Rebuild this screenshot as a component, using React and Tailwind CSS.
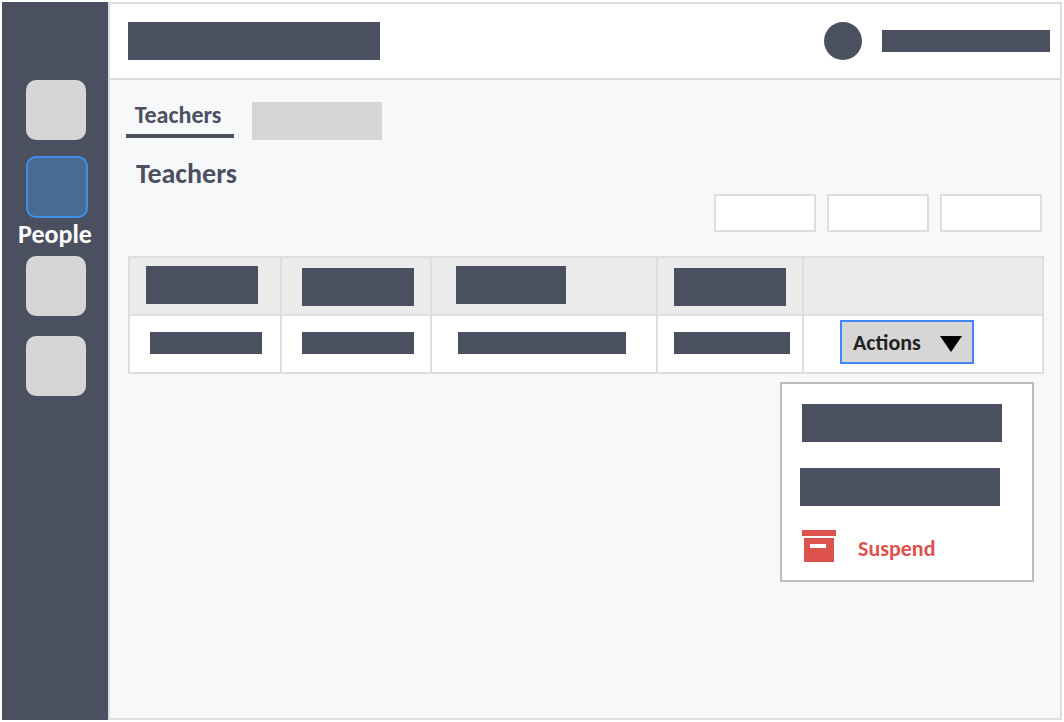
import { useState } from "react";

const columns = [
  { name: "Name", head: "ml-4 mt-2 w-28", cell: "ml-5 w-28" },
  { name: "Role", head: "ml-5 mt-2.5 w-28", cell: "ml-5 w-28" },
  { name: "Email", head: "ml-6 mt-2 w-[110px]", cell: "ml-[26px] w-[168px]" },
  { name: "Status", head: "ml-4 mt-2.5 w-28", cell: "ml-4 w-[116px]" },
];

function NavButton({ label }) {
  return (
    <button type="button" aria-label={label} className="block size-15 rounded-[10px] bg-[#d6d6d6]" />
  );
}

function Sidebar() {
  return (
    <nav aria-label="Main" className="w-[106px] shrink-0 bg-[#4b5060] pt-[78px] pl-6">
      <NavButton label="Home" />
      <button
        type="button"
        aria-labelledby="people-label"
        className="mt-4 block size-[62px] rounded-[10px] border-2 border-[#4190e8] bg-[#486a95]"
      />
      <div className="-ml-6 flex h-[38px] items-start justify-center">
        <span id="people-label" className="text-[26px] leading-8 font-bold text-white">
          People
        </span>
      </div>
      <NavButton label="Classes" />
      <div className="mt-5">
        <NavButton label="Settings" />
      </div>
    </nav>
  );
}

function Header() {
  return (
    <header className="flex h-[76px] items-center border-b-2 border-[#dedede] bg-white pr-2.5 pl-[18px]">
      <div className="h-[38px] w-[252px] bg-[#4b5060]" />
      <div className="ml-auto size-[38px] rounded-full bg-[#4b5060]" />
      <div className="ml-5 h-[22px] w-[168px] bg-[#4b5060]" />
    </header>
  );
}

function ActionsMenu() {
  const [open, setOpen] = useState(true);
  return (
    <div className="relative ml-9 w-[134px]">
      <button
        type="button"
        aria-haspopup="menu"
        aria-expanded={open}
        onClick={() => setOpen(!open)}
        className="flex h-11 w-full items-center justify-between border-2 border-[#4285f4] bg-[#d6d6d6] pr-2.5 pl-[11px] text-[22px] font-bold text-[#222222]"
      >
        Actions
        <svg viewBox="0 0 22 16" className="mt-1 h-4 w-[22px]" aria-hidden="true">
          <path d="M0 0H22L11 16Z" fill="#000" />
        </svg>
      </button>
      {open && (
        <div
          role="menu"
          className="absolute top-[62px] -right-15 h-[200px] w-[254px] border-2 border-[#bcbdc0] bg-white pt-5 pl-[18px]"
        >
          <button type="button" role="menuitem" aria-label="Edit" className="ml-0.5 block h-[38px] w-[200px] bg-[#4b5060]" />
          <button type="button" role="menuitem" aria-label="Message" className="mt-[26px] block h-[38px] w-[200px] bg-[#4b5060]" />
          <button
            type="button"
            role="menuitem"
            className="mt-6 ml-0.5 flex h-8 items-center gap-[22px] text-[22px] font-bold text-[#de524d]"
          >
            <svg viewBox="0 0 34 32" className="h-8 w-[34px]" fill="#de524d" aria-hidden="true">
              <path d="M0 0H34V6H0Z" />
              <path fillRule="evenodd" d="M2 8H32V32H2ZM8 14V18H24V14Z" />
            </svg>
            <span className="pt-1">Suspend</span>
          </button>
        </div>
      )}
    </div>
  );
}

function TeachersTable() {
  return (
    <table className="w-full table-fixed border-separate border-spacing-0 border-2 border-[#dedede] bg-white text-left">
      <colgroup>
        <col className="w-[152px]" />
        <col className="w-[150px]" />
        <col className="w-[226px]" />
        <col className="w-[146px]" />
        <col />
      </colgroup>
      <thead>
        <tr className="h-[58px] bg-[#ebebeb]">
          {columns.map((c) => (
            <th key={c.name} aria-label={c.name} className="border-r-2 border-b-2 border-[#dedede] p-0 align-top">
              <div className={`h-[38px] bg-[#4b5060] ${c.head}`} />
            </th>
          ))}
          <th aria-label="Actions" className="border-b-2 border-[#dedede] p-0" />
        </tr>
      </thead>
      <tbody>
        <tr className="h-14">
          {columns.map((c) => (
            <td key={c.name} className="border-r-2 border-[#dedede] p-0 align-top">
              <div className={`mt-4 h-[22px] bg-[#4b5060] ${c.cell}`} />
            </td>
          ))}
          <td className="p-0 pt-1 align-top">
            <ActionsMenu />
          </td>
        </tr>
      </tbody>
    </table>
  );
}

export default function App() {
  return (
    <div className="flex min-h-screen bg-white p-0.5 font-[Carlito,Calibri,Lato,sans-serif]">
      <Sidebar />
      <div className="min-w-0 flex-1 border-2 border-[#dedede] bg-[#f7f8fa]">
        <Header />
        <main className="pr-4 pl-4">
          <div role="tablist" className="flex items-start gap-[18px] pt-[22px]">
            <button
              type="button"
              role="tab"
              aria-selected="true"
              className="h-9 w-[108px] border-b-4 border-[#4b5060] pr-1 pb-1.5 text-2xl leading-[26px] font-bold text-[#4b5060]"
            >
              Teachers
            </button>
            <button type="button" role="tab" aria-selected="false" aria-label="Students" className="h-[38px] w-[130px] bg-[#d6d6d6]" />
          </div>
          <h1 className="mt-[18px] pl-2.5 text-[28px] leading-8 font-bold text-[#4b5060]">Teachers</h1>
          <div className="mt-1 flex justify-end gap-[11px] pr-0.5">
            <button type="button" aria-label="Filter" className="h-[38px] w-[102px] border-2 border-[#dedede] bg-white" />
            <button type="button" aria-label="Export" className="h-[38px] w-[102px] border-2 border-[#dedede] bg-white" />
            <button type="button" aria-label="Add" className="h-[38px] w-[102px] border-2 border-[#dedede] bg-white" />
          </div>
          <div className="mt-6 ml-0.5">
            <TeachersTable />
          </div>
        </main>
      </div>
    </div>
  );
}
